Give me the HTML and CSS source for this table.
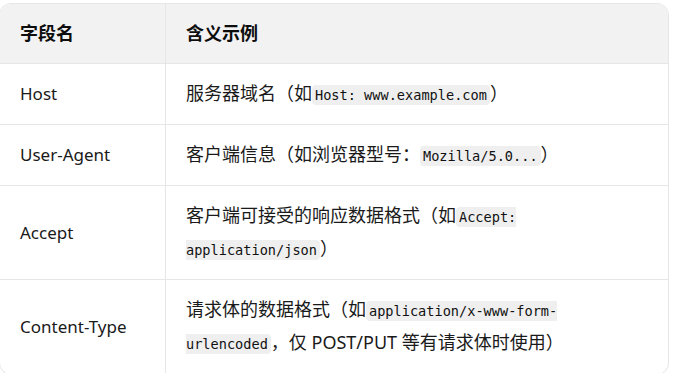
FILE: index.html
```html
<!DOCTYPE html>
<html lang="zh">
<head>
<meta charset="utf-8">
<link rel="stylesheet" href="styles.css">
</head>
<body>
<div class="wrap">
<table class="tbl">
<thead>
<tr><th class="c1">字段名</th><th class="c2">含义示例</th></tr>
</thead>
<tbody>
<tr><td class="c1">Host</td><td class="c2">服务器域名（如<code>Host: www.example.com</code>）</td></tr>
<tr><td class="c1">User-Agent</td><td class="c2">客户端信息（如浏览器型号：<code>Mozilla/5.0...</code>）</td></tr>
<tr><td class="c1">Accept</td><td class="c2">客户端可接受的响应数据格式（如<code>Accept: application/json</code>）</td></tr>
<tr><td class="c1">Content-Type</td><td class="c2">请求体的数据格式（如<code>application/x-www-form-urlencoded</code>，仅 POST/PUT 等有请求体时使用）</td></tr>
</tbody>
</table>
</div>
</body>
</html>
```

FILE: styles.css
```css
html, body {
  margin: 0;
  padding: 0;
  background: #ffffff;
}
body {
  font-family: "Noto Sans", "Noto Sans CJK SC", sans-serif;
  color: #1a1a1a;
  overflow: hidden;
}
.wrap {
  margin: 3px 0 0 -1px;
  width: 670px;
  border: 1px solid #e6e6e6;
  border-radius: 12px;
  overflow: hidden;
  box-sizing: border-box;
}
.tbl {
  width: 100%;
  border-collapse: separate;
  border-spacing: 0;
  table-layout: fixed;
}
.tbl th, .tbl td {
  text-align: left;
  font-size: 18px;
  line-height: 33px;
  padding: 13px 20px 14px 20px;
  border-bottom: 1px solid #e6e6e6;
  vertical-align: middle;
}
.tbl td.c1 {
  font-size: 17px;
}
.tbl th {
  background: #f2f2f2;
  font-weight: 700;
  color: #0d0d0d;
  padding-top: 13px;
  padding-bottom: 13px;
}
.c1 {
  width: 125px;
  border-right: 1px solid #e6e6e6;
}
.tbl .c2 {
  padding-right: 60px;
}
code {
  font-family: "DejaVu Sans Mono", "Liberation Mono", monospace;
  font-size: 13.6px;
  line-height: 1;
  background: #efefef;
  border-radius: 4px;
  padding: 2px 3px;
  color: #111;
}
```
